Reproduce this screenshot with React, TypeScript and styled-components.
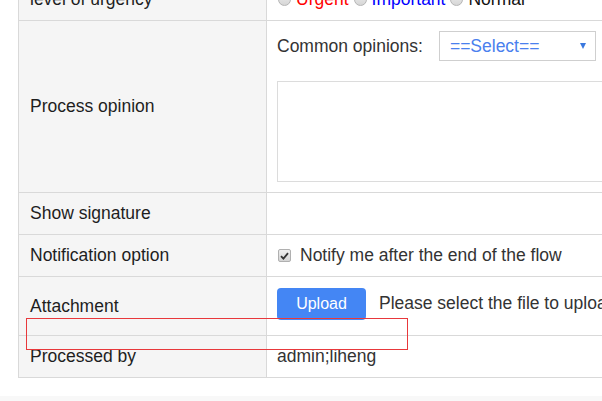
import React from "react";
import styled, { createGlobalStyle } from "styled-components";

const Global = createGlobalStyle`
  html, body { margin: 0; padding: 0; background: #fff; overflow: hidden; }
  body { font-family: "Liberation Sans", Arial, sans-serif; font-size: 17.5px; color: #222; }
`;

const Page = styled.div`
  position: relative;
  width: 602px;
  height: 401px;
  overflow: hidden;
`;

const Table = styled.div`
  margin: -22px 0 0 18px;
  width: 760px;
  border-top: 1px solid #d9d9d9;
  border-left: 1px solid #d9d9d9;
`;

const Row = styled.div<{ $h: number }>`
  display: flex;
  height: ${(p) => p.$h}px;
  border-bottom: 1px solid #d9d9d9;
  box-sizing: border-box;
`;

const Label = styled.div`
  width: 248px;
  flex: none;
  border-right: 1px solid #d9d9d9;
  background: #f5f5f5;
  display: flex;
  align-items: center;
  padding-left: 11px;
  box-sizing: border-box;
  color: #1e1e1e;
`;

const Value = styled.div<{ $pad?: string }>`
  flex: 1;
  display: flex;
  flex-direction: column;
  justify-content: center;
  padding: ${(p) => p.$pad || "0 10px"};
  color: #333;
  white-space: nowrap;
`;

const Line = styled.div<{ $gap?: number }>`
  display: flex;
  align-items: center;
  gap: ${(p) => p.$gap ?? 6}px;
`;

const Radio = styled.span`
  width: 13px;
  height: 13px;
  border-radius: 50%;
  box-sizing: border-box;
  border: 1px solid #b5b5b5;
  background: linear-gradient(#ededed, #d6d6d6);
  flex: none;
  margin: 0 5px 0 1px;
`;

const RadioText = styled.span<{ $c: string }>`
  color: ${(p) => p.$c};
  margin-right: 4px;
`;

const SelectBox = styled.div`
  width: 157px;
  height: 30px;
  box-sizing: border-box;
  border: 1px solid #cfcfcf;
  display: flex;
  align-items: center;
  justify-content: space-between;
  padding: 0 9px 0 10px;
  color: #4a80ee;
  margin-left: 16px;
`;

const Arrow = styled.span`
  width: 0;
  height: 0;
  border-left: 3px solid transparent;
  border-right: 3px solid transparent;
  border-top: 6px solid #3b78de;
`;

const TextArea = styled.div`
  margin-top: 20px;
  height: 101px;
  width: 420px;
  border: 1px solid #dcdcdc;
  box-sizing: border-box;
`;

const Check = styled.span`
  width: 13px;
  height: 13px;
  box-sizing: border-box;
  border: 1px solid #b0b0b0;
  border-radius: 2px;
  background: linear-gradient(#eeeeee, #d4d4d4);
  display: flex;
  align-items: center;
  justify-content: center;
  flex: none;
  margin-left: 1px;
`;

const UploadButton = styled.button`
  width: 89px;
  height: 32px;
  border: none;
  border-radius: 4px;
  background: #4486f4;
  color: #fff;
  font-family: "Liberation Sans", Arial, sans-serif;
  font-size: 16px;
  padding: 0;
  flex: none;
`;

const Footer = styled.div`
  margin-top: 18px;
  height: 6px;
  background: #f8f8f8;
`;

const Marker = styled.div`
  position: absolute;
  left: 26px;
  top: 318px;
  width: 382px;
  height: 32px;
  box-sizing: border-box;
  border: 1px solid #e8383b;
  pointer-events: none;
`;

export default function App() {
  return (
    <Page>
      <Global />
      <Table>
        <Row $h={42}>
          <Label>level of urgency</Label>
          <Value>
            <Line $gap={0}>
              <Radio />
              <RadioText $c="#ff0000">Urgent</RadioText>
              <Radio />
              <RadioText $c="#0000ff">Important</RadioText>
              <Radio />
              <RadioText $c="#111">Normal</RadioText>
            </Line>
          </Value>
        </Row>
        <Row $h={172}>
          <Label>Process opinion</Label>
          <Value $pad="0 10px">
            <Line $gap={0}>
              <span>Common opinions:</span>
              <SelectBox>
                <span>==Select==</span>
                <Arrow />
              </SelectBox>
            </Line>
            <TextArea />
          </Value>
        </Row>
        <Row $h={42}>
          <Label>Show signature</Label>
          <Value />
        </Row>
        <Row $h={42}>
          <Label>Notification option</Label>
          <Value>
            <Line $gap={9}>
              <Check>
                <svg width="9" height="8" viewBox="0 0 9 8">
                  <path d="M1 4.2 L3.4 6.6 L8 1.2" fill="none" stroke="#333" strokeWidth="1.8" />
                </svg>
              </Check>
              <span>Notify me after the end of the flow</span>
            </Line>
          </Value>
        </Row>
        <Row $h={59}>
          <Label>Attachment</Label>
          <Value $pad="0 10px 5px">
            <Line $gap={13}>
              <UploadButton>Upload</UploadButton>
              <span>Please select the file to upload</span>
            </Line>
          </Value>
        </Row>
        <Row $h={42}>
          <Label>Processed by</Label>
          <Value>
            <span>admin;liheng</span>
          </Value>
        </Row>
      </Table>
      <Footer />
      <Marker />
    </Page>
  );
}
